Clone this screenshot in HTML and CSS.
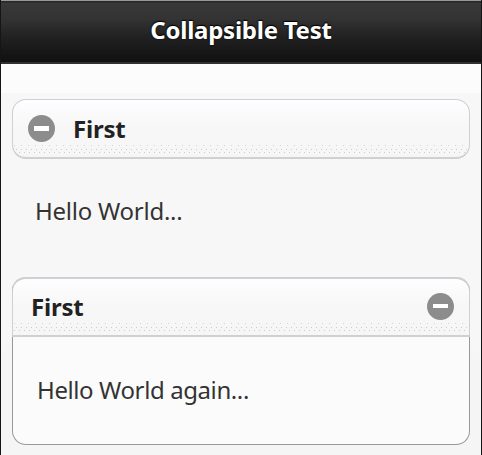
FILE: index.html
```html
<!DOCTYPE html>
<html lang="en">
<head>
<meta charset="utf-8">
<title>Collapsible Test</title>
<link rel="stylesheet" href="styles.css">
</head>
<body>
<div class="page">
  <header class="header"><h1>Collapsible Test</h1></header>
  <main class="content">
    <section class="collapsible">
      <h2 class="heading"><svg class="icon" viewBox="0 0 27 27"><circle cx="13.5" cy="13.5" r="13.5"/><rect x="6" y="11" width="15" height="5"/></svg><span>First</span></h2>
      <p class="body">Hello World...</p>
    </section>
    <section class="collapsible boxed">
      <h2 class="heading"><span>First</span><svg class="icon" viewBox="0 0 27 27"><circle cx="13.5" cy="13.5" r="13.5"/><rect x="6" y="11" width="15" height="4"/></svg></h2>
      <p class="body">Hello World again...</p>
    </section>
  </main>
</div>
</body>
</html>
```
FILE: styles.css
```css
* { box-sizing: border-box; }
body { margin: 0; font-family: "Noto Sans", sans-serif; color: #333; }
h1, h2, p { margin: 0; }
.page { height: 455px; overflow: hidden; border: 1px solid #151515; border-width: 0 1px; background: #f7f7f7; }
.header { height: 64px; display: flex; align-items: center; justify-content: center; padding-bottom: 3px; border-top: 1px solid #999; border-bottom: 2px solid #303030; background: linear-gradient(#292929 1px, #393939 2px, #333 18px, #222 35px, #141414 55px, #111); }
.header h1 { font-size: 24px; line-height: 32px; letter-spacing: -0.25px; color: #fff; text-shadow: 0 -1px 1px #000, 0 0 2px #000; }
.content { height: 391px; padding: 35px 11px 0; background: linear-gradient(#fcfcfc 29px, #f7f7f7 29px, #f7f7f7 270px, #f5f5f5 300px); }
.collapsible { height: 178px; }
.heading {
  height: 60px;
  display: flex;
  align-items: center;
  padding: 0 15px 1px;
  font-size: 24px;
  letter-spacing: -0.2px;
  color: #222;
  text-shadow: 0 1px 1px #fff;
  border: 1px solid #d0d0d0;
  border-bottom-width: 2px;
  border-radius: 14px;
  background:
    radial-gradient(circle at 1.5px 1.5px, #ccc 0.5px, transparent 0.9px) 0 100% / 5px 6px repeat-x,
    radial-gradient(circle at 3.5px 1.5px, #ccc 0.5px, transparent 0.9px) 0 calc(100% - 3px) / 5px 6px repeat-x,
    radial-gradient(circle at 1.5px 1.5px, #d4d4d4 0.5px, transparent 0.9px) 0 calc(100% - 7px) / 7px 6px repeat-x,
    linear-gradient(#fefdff, #f7f7f7 50%, #f6f6f6);
}
.heading .icon { margin-right: 18px; }
.icon { width: 27px; height: 27px; flex: none; }
.icon circle { fill: #8c8c8c; }
.icon rect { fill: #fff; }
.body { padding: 36px 23px; font-size: 24px; line-height: 32px; letter-spacing: -0.25px; text-shadow: 0 1px 0 #fff; }
.boxed { height: 168px; border: 1px solid #999; border-top: 0; border-radius: 14px; background: #fbfbfb; }
.boxed .heading { margin: 0 -1px; justify-content: space-between; padding: 0 15px 1px 18px; border-top-width: 2px; border-radius: 14px 14px 0 0; }
.boxed .icon { margin: 0; }
.boxed .body { padding: 37px 24px; letter-spacing: -0.4px; }
```
